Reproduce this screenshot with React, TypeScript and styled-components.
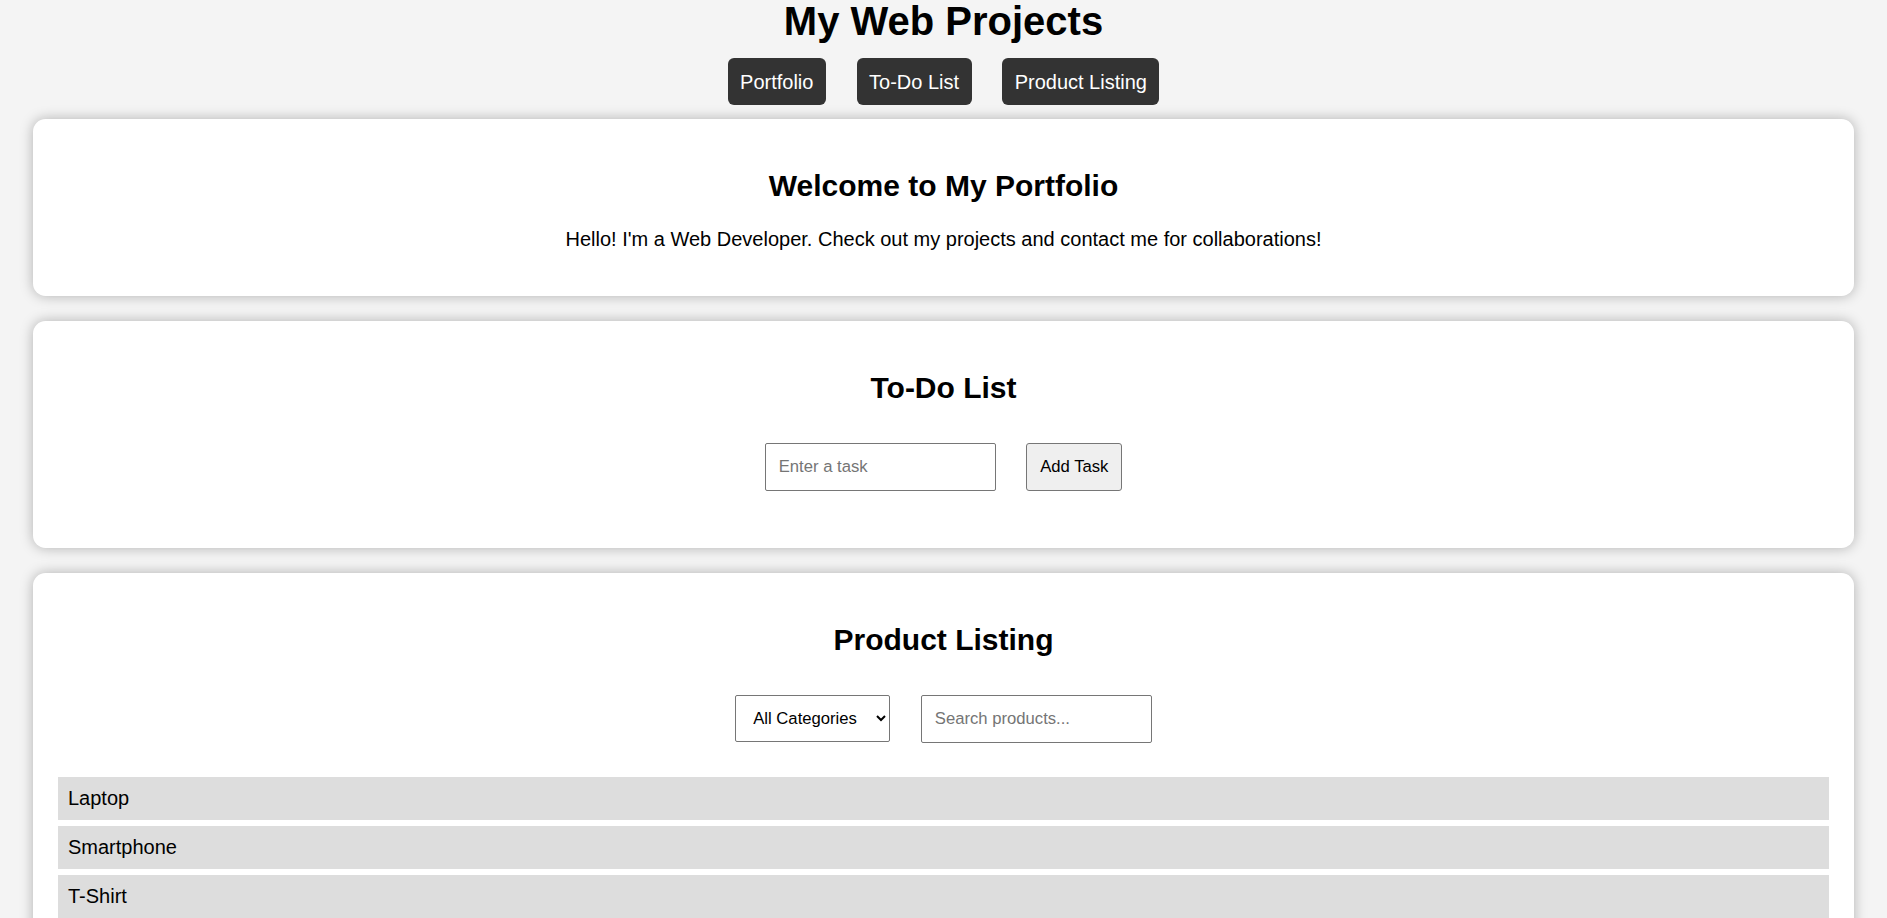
import React, { useState } from "react";
import styled, { createGlobalStyle } from "styled-components";

const GlobalStyle = createGlobalStyle`
  html, body {
    margin: 0;
    padding: 0;
    background: #f4f4f4;
    font-family: "Liberation Sans", Arial, sans-serif;
    color: #000;
  }
  * { box-sizing: border-box; }
`;

const Page = styled.div`
  display: flex;
  flex-direction: column;
  align-items: stretch;
  padding: 0 33px 40px;
`;

const Header = styled.header`
  display: flex;
  flex-direction: column;
  align-items: center;
`;

const Title = styled.h1`
  margin: -2px 0 0;
  font-size: 40px;
  line-height: 46px;
  font-weight: 700;
`;

const Nav = styled.nav`
  display: flex;
  gap: 30.6px;
  margin-top: 14px;
`;

const NavButton = styled.button`
  height: 47px;
  padding: 1px 12.5px 0;
  border: none;
  border-radius: 6px;
  background: #333;
  color: #fff;
  font-family: "Liberation Sans", Arial, sans-serif;
  font-size: 20px;
  white-space: nowrap;
  cursor: pointer;
`;

const Sections = styled.main`
  display: flex;
  flex-direction: column;
  gap: 25px;
  margin-top: 14px;
`;

const Card = styled.section`
  background: #fff;
  border-radius: 12.5px;
  box-shadow: 0 0 12.5px rgba(0, 0, 0, 0.28);
  padding: 25px;
  text-align: center;
`;

const CardTitle = styled.h2`
  margin: 24.5px 0 25px;
  font-size: 30px;
  line-height: 34.5px;
  font-weight: 700;
`;

const Text = styled.p`
  margin: 0 0 20px;
  font-size: 20px;
  line-height: 23px;
`;

const Controls = styled.div`
  display: flex;
  justify-content: center;
  align-items: flex-start;
  gap: 30.6px;
  margin-top: 38px;
`;

const TextInput = styled.input<{ $w: number }>`
  width: ${(p) => p.$w}px;
  height: 48px;
  padding: 0 13px;
  border: 1px solid #767676;
  border-radius: 2px;
  background: #fff;
  font-family: "Liberation Sans", Arial, sans-serif;
  font-size: 16.67px;
  color: #000;
  &::placeholder { color: #757575; }
`;

const Select = styled.select`
  width: 155px;
  height: 47px;
  padding: 0 12px 0 13px;
  border: 1px solid #767676;
  border-radius: 2px;
  background: #fff;
  font-family: "Liberation Sans", Arial, sans-serif;
  font-size: 16.67px;
  color: #000;
`;

const PlainButton = styled.button`
  width: 96px;
  height: 48px;
  padding: 0;
  border: 1px solid #767676;
  border-radius: 3px;
  background: #efefef;
  font-family: "Liberation Sans", Arial, sans-serif;
  font-size: 16.67px;
  white-space: nowrap;
  color: #000;
`;

const ListSpacer = styled.div`
  height: 32px;
`;

const ProductList = styled.ul`
  list-style: none;
  margin: 33.5px 0 0;
  padding: 0;
  display: flex;
  flex-direction: column;
  gap: 6.3px;
  text-align: left;
`;

const ProductItem = styled.li`
  background: #ddd;
  padding: 10px;
  font-size: 20px;
  line-height: 23px;
`;

const products = ["Laptop", "Smartphone", "T-Shirt", "Headphones", "Jeans"];

export default function App() {
  const [task, setTask] = useState("");
  const [query, setQuery] = useState("");
  return (
    <>
      <GlobalStyle />
      <Page>
        <Header>
          <Title>My Web Projects</Title>
          <Nav>
            <NavButton>Portfolio</NavButton>
            <NavButton>To-Do List</NavButton>
            <NavButton>Product Listing</NavButton>
          </Nav>
        </Header>
        <Sections>
          <Card>
            <CardTitle>Welcome to My Portfolio</CardTitle>
            <Text>Hello! I'm a Web Developer. Check out my projects and contact me for collaborations!</Text>
          </Card>
          <Card>
            <CardTitle>To-Do List</CardTitle>
            <Controls>
              <TextInput $w={231} placeholder="Enter a task" value={task} onChange={(e) => setTask(e.target.value)} />
              <PlainButton>Add Task</PlainButton>
            </Controls>
            <ListSpacer />
          </Card>
          <Card>
            <CardTitle>Product Listing</CardTitle>
            <Controls>
              <Select defaultValue="all">
                <option value="all">All Categories</option>
                <option value="electronics">Electronics</option>
                <option value="clothing">Clothing</option>
              </Select>
              <TextInput $w={231} placeholder="Search products..." value={query} onChange={(e) => setQuery(e.target.value)} />
            </Controls>
            <ProductList>
              {products.map((p) => (
                <ProductItem key={p}>{p}</ProductItem>
              ))}
            </ProductList>
          </Card>
        </Sections>
      </Page>
    </>
  );
}
